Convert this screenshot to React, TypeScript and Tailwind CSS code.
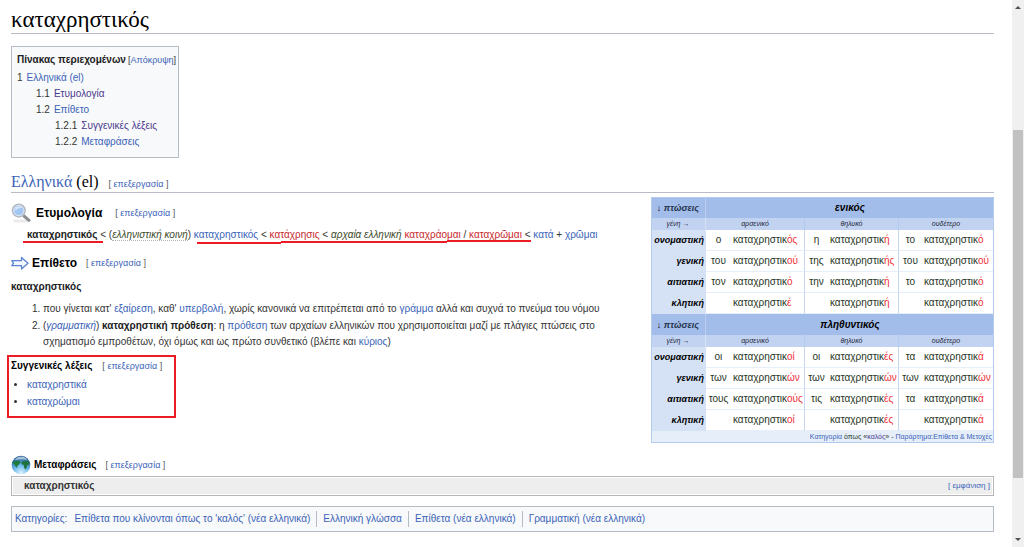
import type { ReactNode } from "react";

const LINK = "text-[#3a63b8]";
const RED = "text-[#c8282e]";
const VISITED = "text-[#4b3a8f]";

function A({ children, tone = LINK }: { children: ReactNode; tone?: string }) {
  return (
    <a href="#" className={`${tone} hover:underline`}>
      {children}
    </a>
  );
}

function Edit() {
  return (
    <span className="text-[9px] font-normal text-[#54595d] [font-family:'Liberation_Sans',Arial,sans-serif]">
      [ <A>επεξεργασία</A> ]
    </span>
  );
}

function Magnifier() {
  return (
    <svg className="size-5 shrink-0" viewBox="0 0 20 20" aria-hidden="true">
      <ellipse cx="10" cy="18" rx="8" ry="1.6" fill="#e9e9e9" />
      <path d="M13 13 18 17.3" stroke="#8b8f94" strokeWidth="3" strokeLinecap="round" />
      <circle cx="7.8" cy="7.6" r="6.3" fill="#a4c6f2" stroke="#b4b9c0" strokeWidth="1.6" />
      <circle cx="7.8" cy="7.6" r="5.1" fill="none" stroke="#e3ebf6" strokeWidth="1" />
      <path d="M4 7.5a4 4 0 0 1 4-4c1.5 0 2.5.5 3 1.3C8.5 5 6 6 4 7.5Z" fill="#d9e8fa" />
    </svg>
  );
}

function Arrow() {
  return (
    <svg className="h-4 w-[18px] shrink-0" viewBox="0 0 18 16" aria-hidden="true">
      <path
        d="M.8 5.7H10.500V2.400L17 8.200 10.500 14V10.700H.8L2.500 8.200Z"
        fill="#f4f7fe"
        stroke="#5a82d6"
        strokeWidth="1.3"
        strokeLinejoin="round"
      />
    </svg>
  );
}

function Globe() {
  return (
    <svg className="size-5 shrink-0" viewBox="0 0 20 20" aria-hidden="true">
      <defs>
        <radialGradient id="sea" cx="50%" cy="95%" r="95%">
          <stop offset="0" stopColor="#e2f6ff" />
          <stop offset="0.45" stopColor="#6db9ea" />
          <stop offset="1" stopColor="#1b4c92" />
        </radialGradient>
      </defs>
      <circle cx="10" cy="10" r="9.3" fill="url(#sea)" />
      <path d="M1.2 7.500C2.500 6 5 5.500 8.500 6L10 7.200 8.500 8.500 7.500 10 6.500 10.500 6 13 4.500 11.500 3.500 9.500Z" fill="#1f7a3c" />
      <path d="M10.500 7 13 5.800l4.500.200c.8 1 1.200 2.200 1.200 3.500L16.500 10l-1.500 4.500-1.800-1.500-.500-3-2.200-1Z" fill="#1f7340" />
      <path d="M3.500 5C5.500 2.500 8 1.500 10.500 1.500S15 2.800 16.500 4.800C12.500 3.800 8 4 3.500 5Z" fill="#d9ece8" opacity=".7" />
    </svg>
  );
}

const TOC = [
  { n: "1", t: "Ελληνικά (el)", pad: "", tone: LINK },
  { n: "1.1", t: "Ετυμολογία", pad: "pl-[19px]", tone: VISITED },
  { n: "1.2", t: "Επίθετο", pad: "pl-[19px]", tone: LINK },
  { n: "1.2.1", t: "Συγγενικές λέξεις", pad: "pl-[38px]", tone: VISITED },
  { n: "1.2.2", t: "Μεταφράσεις", pad: "pl-[38px]", tone: LINK },
];

const GENDERS = ["αρσενικό", "θηλυκό", "ουδέτερο"];

const NUMBERS = [
  {
    name: "ενικός",
    rows: [
      { c: "ονομαστική", f: [["ο", "ός"], ["η", "ή"], ["το", "ό"]] },
      { c: "γενική", f: [["του", "ού"], ["της", "ής"], ["του", "ού"]] },
      { c: "αιτιατική", f: [["τον", "ό"], ["την", "ή"], ["το", "ό"]] },
      { c: "κλητική", f: [["", "έ"], ["", "ή"], ["", "ό"]] },
    ],
  },
  {
    name: "πληθυντικός",
    rows: [
      { c: "ονομαστική", f: [["οι", "οί"], ["οι", "ές"], ["τα", "ά"]] },
      { c: "γενική", f: [["των", "ών"], ["των", "ών"], ["των", "ών"]] },
      { c: "αιτιατική", f: [["τους", "ούς"], ["τις", "ές"], ["τα", "ά"]] },
      { c: "κλητική", f: [["", "οί"], ["", "ές"], ["", "ά"]] },
    ],
  },
];

function Declension() {
  return (
    <table className="mt-1 w-[343px] shrink-0 table-fixed border-separate border-spacing-0 self-start whitespace-nowrap text-[10px] leading-4 text-[#1f3524] outline-1 -outline-offset-1 outline-[#b4cbf0]">
      <colgroup>
        <col className="w-[55px]" />
        <col className="w-[25px]" />
        <col className="w-[74px]" />
        <col className="w-[23px]" />
        <col className="w-[71px]" />
        <col className="w-[23px]" />
        <col className="w-[72px]" />
      </colgroup>
      {NUMBERS.map((num) => (
        <tbody key={num.name}>
          <tr className="h-[21px] bg-[#a3bdea] italic text-black">
            <th scope="col" className="border-r border-[#bccff0] p-0 text-[9px] font-normal">
              ↓ <span className="font-bold text-[#26354f]">πτώσεις</span>
            </th>
            <th scope="colgroup" colSpan={6} className="p-0">
              {num.name}
            </th>
          </tr>
          <tr className="h-3 bg-[#c2d3f1] text-[7px] italic leading-[10px] text-[#1c2638]">
            <th scope="row" className="border-r border-[#d5e1f5] p-0 font-normal">γένη →</th>
            {GENDERS.map((g) => (
              <th key={g} scope="colgroup" colSpan={2} className="border-r border-[#b4cbf0] p-0 font-normal">
                {g}
              </th>
            ))}
          </tr>
          {num.rows.map((r) => (
            <tr key={r.c} className="h-[21px] bg-white">
              <th scope="row" className="border-b border-[#d5e1f5] bg-[#d5e1f5] p-0 pr-0.5 text-right text-[9px] italic text-black">
                {r.c}
              </th>
              {r.f.map(([art, end], i) => [
                <td key={`a${i}`} className="border-b border-[#e6eefa] p-0 text-center">
                  {art}
                </td>,
                <td key={`w${i}`} className="border-r border-b border-[#c6d7f3] border-b-[#e6eefa] p-0 pl-0.5">
                  καταχρηστικ<span className="text-[#f03038]">{end}</span>
                </td>,
              ])}
            </tr>
          ))}
        </tbody>
      ))}
      <tfoot>
        <tr className="h-3 bg-[#e6eefa] text-[7px] leading-[10px]">
          <td colSpan={7} className="p-0 pr-0.5 text-right">
            <A>Κατηγορία</A> όπως «<A tone={VISITED}>καλός</A>» - <A>Παράρτημα:Επίθετα &amp; Μετοχές</A>
          </td>
        </tr>
      </tfoot>
    </table>
  );
}

function Mark({ place }: { place: string }) {
  return <span aria-hidden="true" className={`absolute h-0.5 bg-[#ec1c24] ${place}`} />;
}

const CATEGORIES = [
  "Επίθετα που κλίνονται όπως το 'καλός' (νέα ελληνικά)",
  "Ελληνική γλώσσα",
  "Επίθετα (νέα ελληνικά)",
  "Γραμματική (νέα ελληνικά)",
];

export default function App() {
  return (
    <div className="flex min-h-screen bg-white text-[10px] leading-4 text-[#333333] [font-family:'Liberation_Sans',Arial,sans-serif]">
      <main className="min-w-0 flex-1 pr-[18px] pl-[11px]">
        <h1 className="border-b border-[#b9bcc4] pt-1.5 text-[23px] leading-[27px] text-black [font-family:'Liberation_Serif',serif]">
          καταχρηστικός
        </h1>

        <nav className="mt-3 w-fit border border-[#b6bcc5] bg-[#f8f9fa] pt-[5px] pr-0.5 pb-[7px] pl-[5px]">
          <div className="flex gap-0.5">
            <b className="text-[#202122]">Πίνακας περιεχομένων</b>
            <span className="text-[9px]">
              [<button type="button" className={LINK}>Απόκρυψη</button>]
            </span>
          </div>
          <ol className="mt-0.5">
            {TOC.map((e) => (
              <li key={e.n} className={`flex gap-1 ${e.pad}`}>
                <span>{e.n}</span>
                <A tone={e.tone}>{e.t}</A>
              </li>
            ))}
          </ol>
        </nav>

        <h2 className="mt-3.5 flex h-[21px] items-center gap-2.5 border-b border-[#b9bcc4] text-[16px] leading-5 text-black [font-family:'Liberation_Serif',serif]">
          <span>
            <A>Ελληνικά</A> (el)
          </span>
          <span className="flex pt-1">
            <Edit />
          </span>
        </h2>

        <div className="flex">
          <div className="min-w-0 flex-1">
            <h3 className="mt-2.5 flex h-5 items-center gap-[5px] text-[12px] font-bold text-black">
              <Magnifier />
              <span className="pr-2">Ετυμολογία</span>
              <Edit />
            </h3>
            <p className="relative mt-1 pl-4 whitespace-nowrap">
              <b className="text-[#202122]">καταχρηστικός</b> &lt; (
              <i className="border-b border-dotted border-[#b5b5b5] text-[#3d4a2c]">ελληνιστική κοινή</i>){" "}
              <A>καταχρηστικός</A> &lt; <A tone={RED}>κατάχρησις</A> &lt;{" "}
              <i className="text-[#3d4a2c]">αρχαία ελληνική</i> <A tone={RED}>καταχράομαι</A> /{" "}
              <A tone={RED}>καταχρῶμαι</A> &lt; <A>κατά</A> + <A>χρῶμαι</A>
              <Mark place="top-3.5 left-3 w-20" />
              <Mark place="top-[15px] left-[186px] w-[84px]" />
              <Mark place="top-3.5 left-[270px] w-[166px]" />
              <Mark place="top-[13px] left-[436px] w-[84px]" />
            </p>

            <h3 className="mt-[11px] flex h-[18px] items-center gap-[3px] text-[12px] font-bold text-black">
              <Arrow />
              <span className="pr-1.5">Επίθετο</span>
              <Edit />
            </h3>
            <p className="mt-[7px] text-[#202122]">
              <b>καταχρηστικός</b>
            </p>
            <ol className="mt-1.5 flex list-decimal flex-col gap-px pl-8">
              <li>
                που γίνεται κατ' <A>εξαίρεση</A>, καθ' <A>υπερβολή</A>, χωρίς κανονικά να επιτρέπεται από το{" "}
                <A>γράμμα</A> αλλά και συχνά το πνεύμα του νόμου
              </li>
              <li>
                (<i><A>γραμματική</A></i>) <b className="text-[#202122]">καταχρηστική πρόθεση</b>: η <A>πρόθεση</A> των
                αρχαίων ελληνικών που χρησιμοποιείται μαζί με πλάγιες πτώσεις στο
                <br />
                σχηματισμό εμπροθέτων, όχι όμως και ως πρώτο συνθετικό (βλέπε και <A>κύριος</A>)
              </li>
            </ol>

            <section className="relative mt-2">
              <span aria-hidden="true" className="absolute -top-[3px] -left-1 h-[63px] w-[169px] border-2 border-[#ec1c24]" />
              <h4 className="flex gap-2.5 font-bold text-black">
                Συγγενικές λέξεις <Edit />
              </h4>
              <ul className="mt-[3px] flex list-disc flex-col gap-px pl-4">
                <li><A>καταχρηστικά</A></li>
                <li><A>καταχρώμαι</A></li>
              </ul>
            </section>
          </div>
          <Declension />
        </div>

        <h4 className="mt-3 flex h-5 items-center gap-[3px] font-bold text-black">
          <Globe />
          <span className="pr-1.5">Μεταφράσεις</span>
          <Edit />
        </h4>
        <div className="mt-px border border-[#b5b5b5] p-px">
          <div className="flex h-4 items-center justify-between bg-[#eeeeee] pr-0.5 pl-[11px]">
            <b>καταχρηστικός</b>
            <button type="button" className={`text-[8px] ${LINK}`}>[ εμφάνιση ]</button>
          </div>
        </div>

        <footer className="mt-2.5 flex items-center border border-[#b6bcc5] bg-[#f8f9fa] px-[3px] py-1">
          <span className="pr-px"><A>Κατηγορίες:</A></span>
          <ul className="flex divide-x divide-[#b6bcc5]">
            {CATEGORIES.map((c) => (
              <li key={c} className="px-1.5">
                <A>{c}</A>
              </li>
            ))}
          </ul>
        </footer>
      </main>

      <aside aria-hidden="true" className="flex h-screen w-3 flex-col items-center justify-between bg-[#f0f0f0] py-1">
        <svg className="h-2 w-2" viewBox="0 0 8 8"><path d="M1 5 4 2l3 3Z" fill="#505050" /></svg>
        <div className="mt-[118px] mb-[57px] w-2.5 flex-1 bg-[#c1c1c1]" />
        <svg className="h-2 w-2" viewBox="0 0 8 8"><path d="M1 3h6L4 6Z" fill="#505050" /></svg>
      </aside>
    </div>
  );
}
